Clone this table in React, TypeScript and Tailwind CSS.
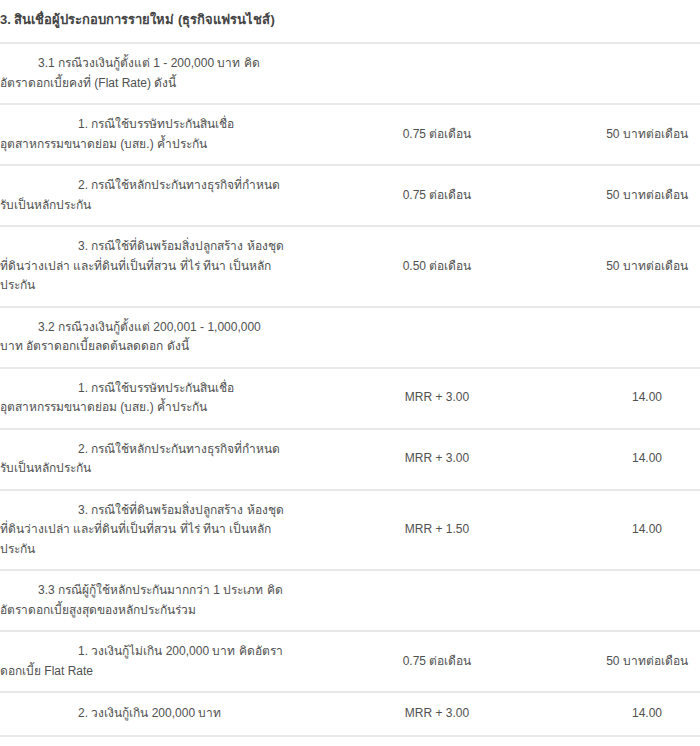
import React from 'react'

type Row = {
	lines: string[]
	indent: 'section' | 'item'
	rate?: string
	fee?: string
}

const rows: Row[] = [
	{ lines: ['3.1 กรณีวงเงินกู้ตั้งแต่ 1 - 200,000 บาท คิด', 'อัตราดอกเบี้ยคงที่ (Flat Rate) ดังนี้'], indent: 'section' },
	{ lines: ['1. กรณีใช้บรรษัทประกันสินเชื่อ', 'อุตสาหกรรมขนาดย่อม (บสย.) ค้ำประกัน'], indent: 'item', rate: '0.75 ต่อเดือน', fee: '50 บาทต่อเดือน' },
	{ lines: ['2. กรณีใช้หลักประกันทางธุรกิจที่กำหนด', 'รับเป็นหลักประกัน'], indent: 'item', rate: '0.75 ต่อเดือน', fee: '50 บาทต่อเดือน' },
	{ lines: ['3. กรณีใช้ที่ดินพร้อมสิ่งปลูกสร้าง ห้องชุด', 'ที่ดินว่างเปล่า และที่ดินที่เป็นที่สวน ที่ไร่ ทีนา เป็นหลัก', 'ประกัน'], indent: 'item', rate: '0.50 ต่อเดือน', fee: '50 บาทต่อเดือน' },
	{ lines: ['3.2 กรณีวงเงินกู้ตั้งแต่ 200,001 - 1,000,000', 'บาท อัตราดอกเบี้ยลดต้นลดดอก ดังนี้'], indent: 'section' },
	{ lines: ['1. กรณีใช้บรรษัทประกันสินเชื่อ', 'อุตสาหกรรมขนาดย่อม (บสย.) ค้ำประกัน'], indent: 'item', rate: 'MRR + 3.00', fee: '14.00' },
	{ lines: ['2. กรณีใช้หลักประกันทางธุรกิจที่กำหนด', 'รับเป็นหลักประกัน'], indent: 'item', rate: 'MRR + 3.00', fee: '14.00' },
	{ lines: ['3. กรณีใช้ที่ดินพร้อมสิ่งปลูกสร้าง ห้องชุด', 'ที่ดินว่างเปล่า และที่ดินที่เป็นที่สวน ที่ไร่ ทีนา เป็นหลัก', 'ประกัน'], indent: 'item', rate: 'MRR + 1.50', fee: '14.00' },
	{ lines: ['3.3 กรณีผู้กู้ใช้หลักประกันมากกว่า 1 ประเภท คิด', 'อัตราดอกเบี้ยสูงสุดของหลักประกันร่วม'], indent: 'section' },
	{ lines: ['1. วงเงินกู้ไม่เกิน 200,000 บาท คิดอัตรา', 'ดอกเบี้ย Flat Rate'], indent: 'item', rate: '0.75 ต่อเดือน', fee: '50 บาทต่อเดือน' },
	{ lines: ['2. วงเงินกู้เกิน 200,000 บาท'], indent: 'item', rate: 'MRR + 3.00', fee: '14.00' },
]

export default function App() {
	return (
		<div className="w-[700px] h-[746px] overflow-hidden bg-white text-[#505050] text-[12px] leading-[19.5px] font-['Tahoma','Liberation_Sans','Noto_Sans',sans-serif]">
			<div className="h-[44px] flex items-center border-b-2 border-[#e8e8e8] pb-[2px]">
				<span className="font-bold text-[13px] text-[#444]">3. สินเชื่อผู้ประกอบการรายใหม่ (ธุรกิจแฟรนไชส์)</span>
			</div>
			{rows.map((row, i) => (
				<div key={i} className={`grid grid-cols-[290px_294px_126px] items-center border-b-2 border-[#e8e8e8] ${row.lines.length === 1 ? 'py-[11px]' : 'py-[10px]'}`}>
					<div className="whitespace-nowrap">
						{row.lines.map((line, j) => (
							<div key={j} className={j === 0 ? (row.indent === 'section' ? 'pl-[38px]' : 'pl-[78px]') : ''}>
								{line}
							</div>
						))}
					</div>
					<div className="text-center whitespace-nowrap">{row.rate}</div>
					<div className="text-center whitespace-nowrap">{row.fee}</div>
				</div>
			))}
		</div>
	)
}
